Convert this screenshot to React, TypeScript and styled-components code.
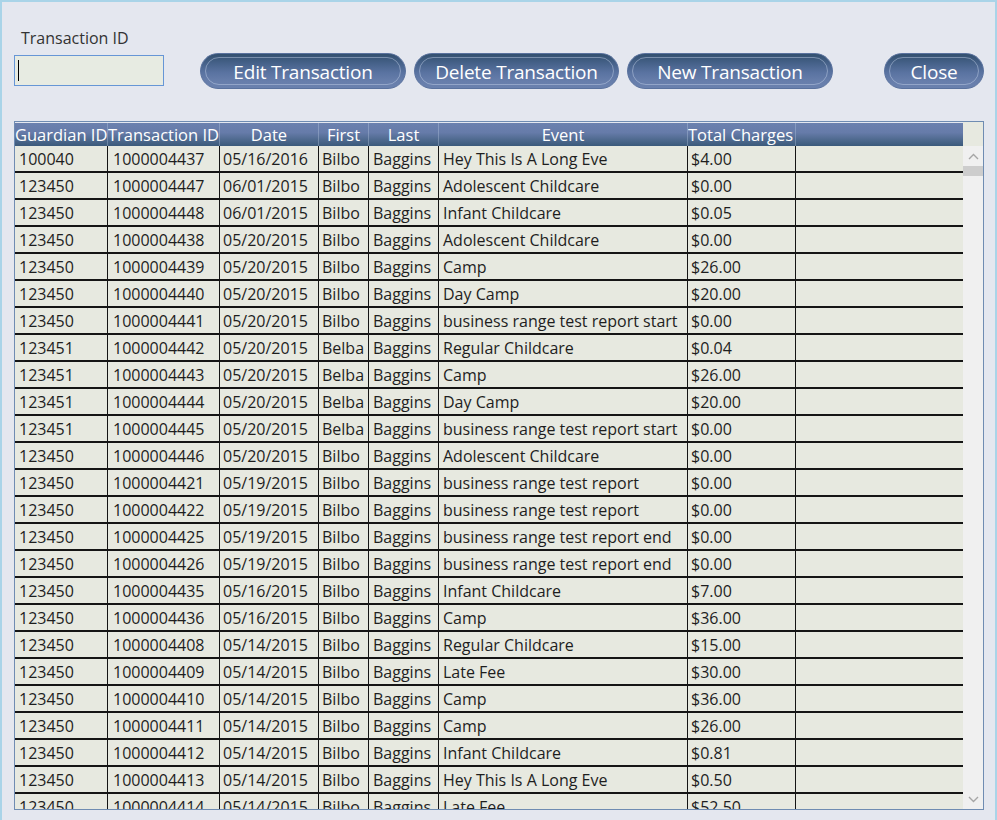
import { ReactElement } from 'react'
import styled, { createGlobalStyle } from 'styled-components'

const GlobalStyle = createGlobalStyle`
  html, body {
    margin: 0;
    padding: 0;
    background: #e4e7ef;
  }
  * {
    box-sizing: border-box;
  }
`

const colors = {
  page: '#e4e7ef',
  frame: '#a9d4e8',
  row: '#e7e9e0',
  line: '#151515',
  text: '#1e1e1e',
  track: '#f0f0f0'
}

const fontStack = `"Open Sans", "Noto Sans", "DejaVu Sans", sans-serif`

const Window = styled.div`
  width: 997px;
  height: 820px;
  border: 2px solid ${colors.frame};
  border-bottom: none;
  background: ${colors.page};
  font-family: ${fontStack};
  overflow: hidden;
`

const Toolbar = styled.div`
  display: flex;
  align-items: flex-end;
  padding: 25px 11px 0 12px;
`

const FieldGroup = styled.div`
  display: flex;
  flex-direction: column;
  margin-bottom: 3px;
`

const Label = styled.div`
  margin-left: 7px;
  font-size: 16px;
  line-height: 22px;
  color: #333;
`

const Field = styled.div`
  display: flex;
  align-items: center;
  margin-top: 6px;
  width: 150px;
  height: 31px;
  padding-left: 3px;
  border: 1px solid #6696d6;
  background: #e7ebe2;
`

const Caret = styled.span`
  width: 1px;
  height: 21px;
  background: #000;
`

const ButtonRow = styled.div`
  display: flex;
  gap: 8px;
  margin-left: 36px;
`

const PillButton = styled.button<{ width: number }>`
  position: relative;
  width: ${({ width }) => width}px;
  height: 36px;
  padding: 2px 0 0;
  border: 1px solid #5a729e;
  border-radius: 18px;
  background: linear-gradient(
    to bottom,
    #33506f 0%,
    #46628a 28%,
    #5a73a1 55%,
    #677eab 80%,
    #6a81ae 100%
  );
  color: #fff;
  font-family: ${fontStack};
  font-size: 19px;
  letter-spacing: -0.2px;
  cursor: pointer;

  &::before {
    content: '';
    position: absolute;
    inset: 3px 4px 3px 4px;
    border: 1px solid rgba(200, 212, 235, 0.45);
    border-radius: 15px;
    pointer-events: none;
  }
`

const CloseButton = styled(PillButton)`
  margin-left: auto;
`

const GridFrame = styled.div`
  display: flex;
  margin: 32px 0 0 12px;
  width: 970px;
  height: 689px;
  border: 1px solid #6f8cb2;
`

const GridArea = styled.div`
  flex: 1;
  display: flex;
  flex-direction: column;
  padding-top: 1px;
  overflow: hidden;
  background: ${colors.page};
`

const columns = '93px 112px 99px 50px 70px 249px 108px 1fr'

const HeaderRow = styled.div`
  display: grid;
  grid-template-columns: ${columns};
  height: 23px;
  overflow: hidden;
  background: linear-gradient(
    to bottom,
    #6b81af 0%,
    #667ba9 42%,
    #4f6a8f 72%,
    #3b5a7b 100%
  );
`

const HeaderCell = styled.div<{ align?: string }>`
  border-right: 1px solid rgba(190, 205, 230, 0.35);
  color: #fff;
  font-size: 16.5px;
  line-height: 24px;
  text-align: ${({ align }) => align || 'center'};
  white-space: nowrap;
  overflow: hidden;

  &:last-child {
    border-right: none;
  }
`

const Body = styled.div`
  flex: 1;
  overflow: hidden;
`

const Row = styled.div`
  display: grid;
  grid-template-columns: ${columns};
  height: 27px;
  background: ${colors.row};
  border-bottom: 2px solid ${colors.line};
`

const Cell = styled.div<{ pad?: number }>`
  padding: 2px 0 0 ${({ pad }) => pad ?? 3}px;
  border-right: 1px solid ${colors.line};
  color: ${colors.text};
  font-size: 16px;
  line-height: 23px;
  white-space: nowrap;
  overflow: hidden;

  &:last-child {
    border-right: none;
  }
`

const ScrollBar = styled.div`
  width: 20px;
  display: flex;
  flex-direction: column;
  background: ${colors.track};
`

const ScrollCorner = styled.div`
  height: 24px;
  background: ${colors.row};
`

const ScrollArrow = styled.div`
  display: flex;
  align-items: center;
  justify-content: center;
  height: 20px;
`

const ScrollThumb = styled.div`
  height: 10px;
  background: #cdcdcd;
`

const ScrollTrack = styled.div`
  flex: 1;
`

const Chevron = ({ up }: { up?: boolean }): ReactElement => (
  <svg width="11" height="7" viewBox="0 0 11 7">
    <polyline
      points={up ? '1,6 5.5,1.5 10,6' : '1,1 5.5,5.5 10,1'}
      fill="none"
      stroke="#a6a6a6"
      strokeWidth="1.4"
    />
  </svg>
)

type Txn = [string, string, string, string, string, string, string]

const rows: Txn[] = [
  ['100040', '1000004437', '05/16/2016', 'Bilbo', 'Baggins', 'Hey This Is A Long Eve', '$4.00'],
  ['123450', '1000004447', '06/01/2015', 'Bilbo', 'Baggins', 'Adolescent Childcare', '$0.00'],
  ['123450', '1000004448', '06/01/2015', 'Bilbo', 'Baggins', 'Infant Childcare', '$0.05'],
  ['123450', '1000004438', '05/20/2015', 'Bilbo', 'Baggins', 'Adolescent Childcare', '$0.00'],
  ['123450', '1000004439', '05/20/2015', 'Bilbo', 'Baggins', 'Camp', '$26.00'],
  ['123450', '1000004440', '05/20/2015', 'Bilbo', 'Baggins', 'Day Camp', '$20.00'],
  ['123450', '1000004441', '05/20/2015', 'Bilbo', 'Baggins', 'business range test report start', '$0.00'],
  ['123451', '1000004442', '05/20/2015', 'Belba', 'Baggins', 'Regular Childcare', '$0.04'],
  ['123451', '1000004443', '05/20/2015', 'Belba', 'Baggins', 'Camp', '$26.00'],
  ['123451', '1000004444', '05/20/2015', 'Belba', 'Baggins', 'Day Camp', '$20.00'],
  ['123451', '1000004445', '05/20/2015', 'Belba', 'Baggins', 'business range test report start', '$0.00'],
  ['123450', '1000004446', '05/20/2015', 'Bilbo', 'Baggins', 'Adolescent Childcare', '$0.00'],
  ['123450', '1000004421', '05/19/2015', 'Bilbo', 'Baggins', 'business range test report', '$0.00'],
  ['123450', '1000004422', '05/19/2015', 'Bilbo', 'Baggins', 'business range test report', '$0.00'],
  ['123450', '1000004425', '05/19/2015', 'Bilbo', 'Baggins', 'business range test report end', '$0.00'],
  ['123450', '1000004426', '05/19/2015', 'Bilbo', 'Baggins', 'business range test report end', '$0.00'],
  ['123450', '1000004435', '05/16/2015', 'Bilbo', 'Baggins', 'Infant Childcare', '$7.00'],
  ['123450', '1000004436', '05/16/2015', 'Bilbo', 'Baggins', 'Camp', '$36.00'],
  ['123450', '1000004408', '05/14/2015', 'Bilbo', 'Baggins', 'Regular Childcare', '$15.00'],
  ['123450', '1000004409', '05/14/2015', 'Bilbo', 'Baggins', 'Late Fee', '$30.00'],
  ['123450', '1000004410', '05/14/2015', 'Bilbo', 'Baggins', 'Camp', '$36.00'],
  ['123450', '1000004411', '05/14/2015', 'Bilbo', 'Baggins', 'Camp', '$26.00'],
  ['123450', '1000004412', '05/14/2015', 'Bilbo', 'Baggins', 'Infant Childcare', '$0.81'],
  ['123450', '1000004413', '05/14/2015', 'Bilbo', 'Baggins', 'Hey This Is A Long Eve', '$0.50'],
  ['123450', '1000004414', '05/14/2015', 'Bilbo', 'Baggins', 'Late Fee', '$52.50'],
  ['123450', '1000004415', '05/14/2015', 'Bilbo', 'Baggins', 'Camp', '$26.00']
]

const cellPads = [4, 5, 3, 3, 4, 4, 3]

const headers: { label: string; align?: string }[] = [
  { label: 'Guardian ID', align: 'left' },
  { label: 'Transaction ID' },
  { label: 'Date' },
  { label: 'First' },
  { label: 'Last' },
  { label: 'Event' },
  { label: 'Total Charges', align: 'left' },
  { label: '' }
]

const App = (): ReactElement => {
  return (
    <Window>
      <GlobalStyle />
      <Toolbar>
        <FieldGroup>
          <Label>Transaction ID</Label>
          <Field>
            <Caret />
          </Field>
        </FieldGroup>
        <ButtonRow>
          <PillButton width={206}>Edit Transaction</PillButton>
          <PillButton width={205}>Delete Transaction</PillButton>
          <PillButton width={206}>New Transaction</PillButton>
        </ButtonRow>
        <CloseButton width={100}>Close</CloseButton>
      </Toolbar>

      <GridFrame>
        <GridArea>
          <HeaderRow>
            {headers.map((h, i) => (
              <HeaderCell key={i} align={h.align}>
                {h.label}
              </HeaderCell>
            ))}
          </HeaderRow>
          <Body>
            {rows.map((r, i) => (
              <Row key={i}>
                {r.map((value, j) => (
                  <Cell key={j} pad={cellPads[j]}>
                    {value}
                  </Cell>
                ))}
                <Cell />
              </Row>
            ))}
          </Body>
        </GridArea>
        <ScrollBar>
          <ScrollCorner />
          <ScrollArrow>
            <Chevron up />
          </ScrollArrow>
          <ScrollThumb />
          <ScrollTrack />
          <ScrollArrow>
            <Chevron />
          </ScrollArrow>
        </ScrollBar>
      </GridFrame>
    </Window>
  )
}

export default App
